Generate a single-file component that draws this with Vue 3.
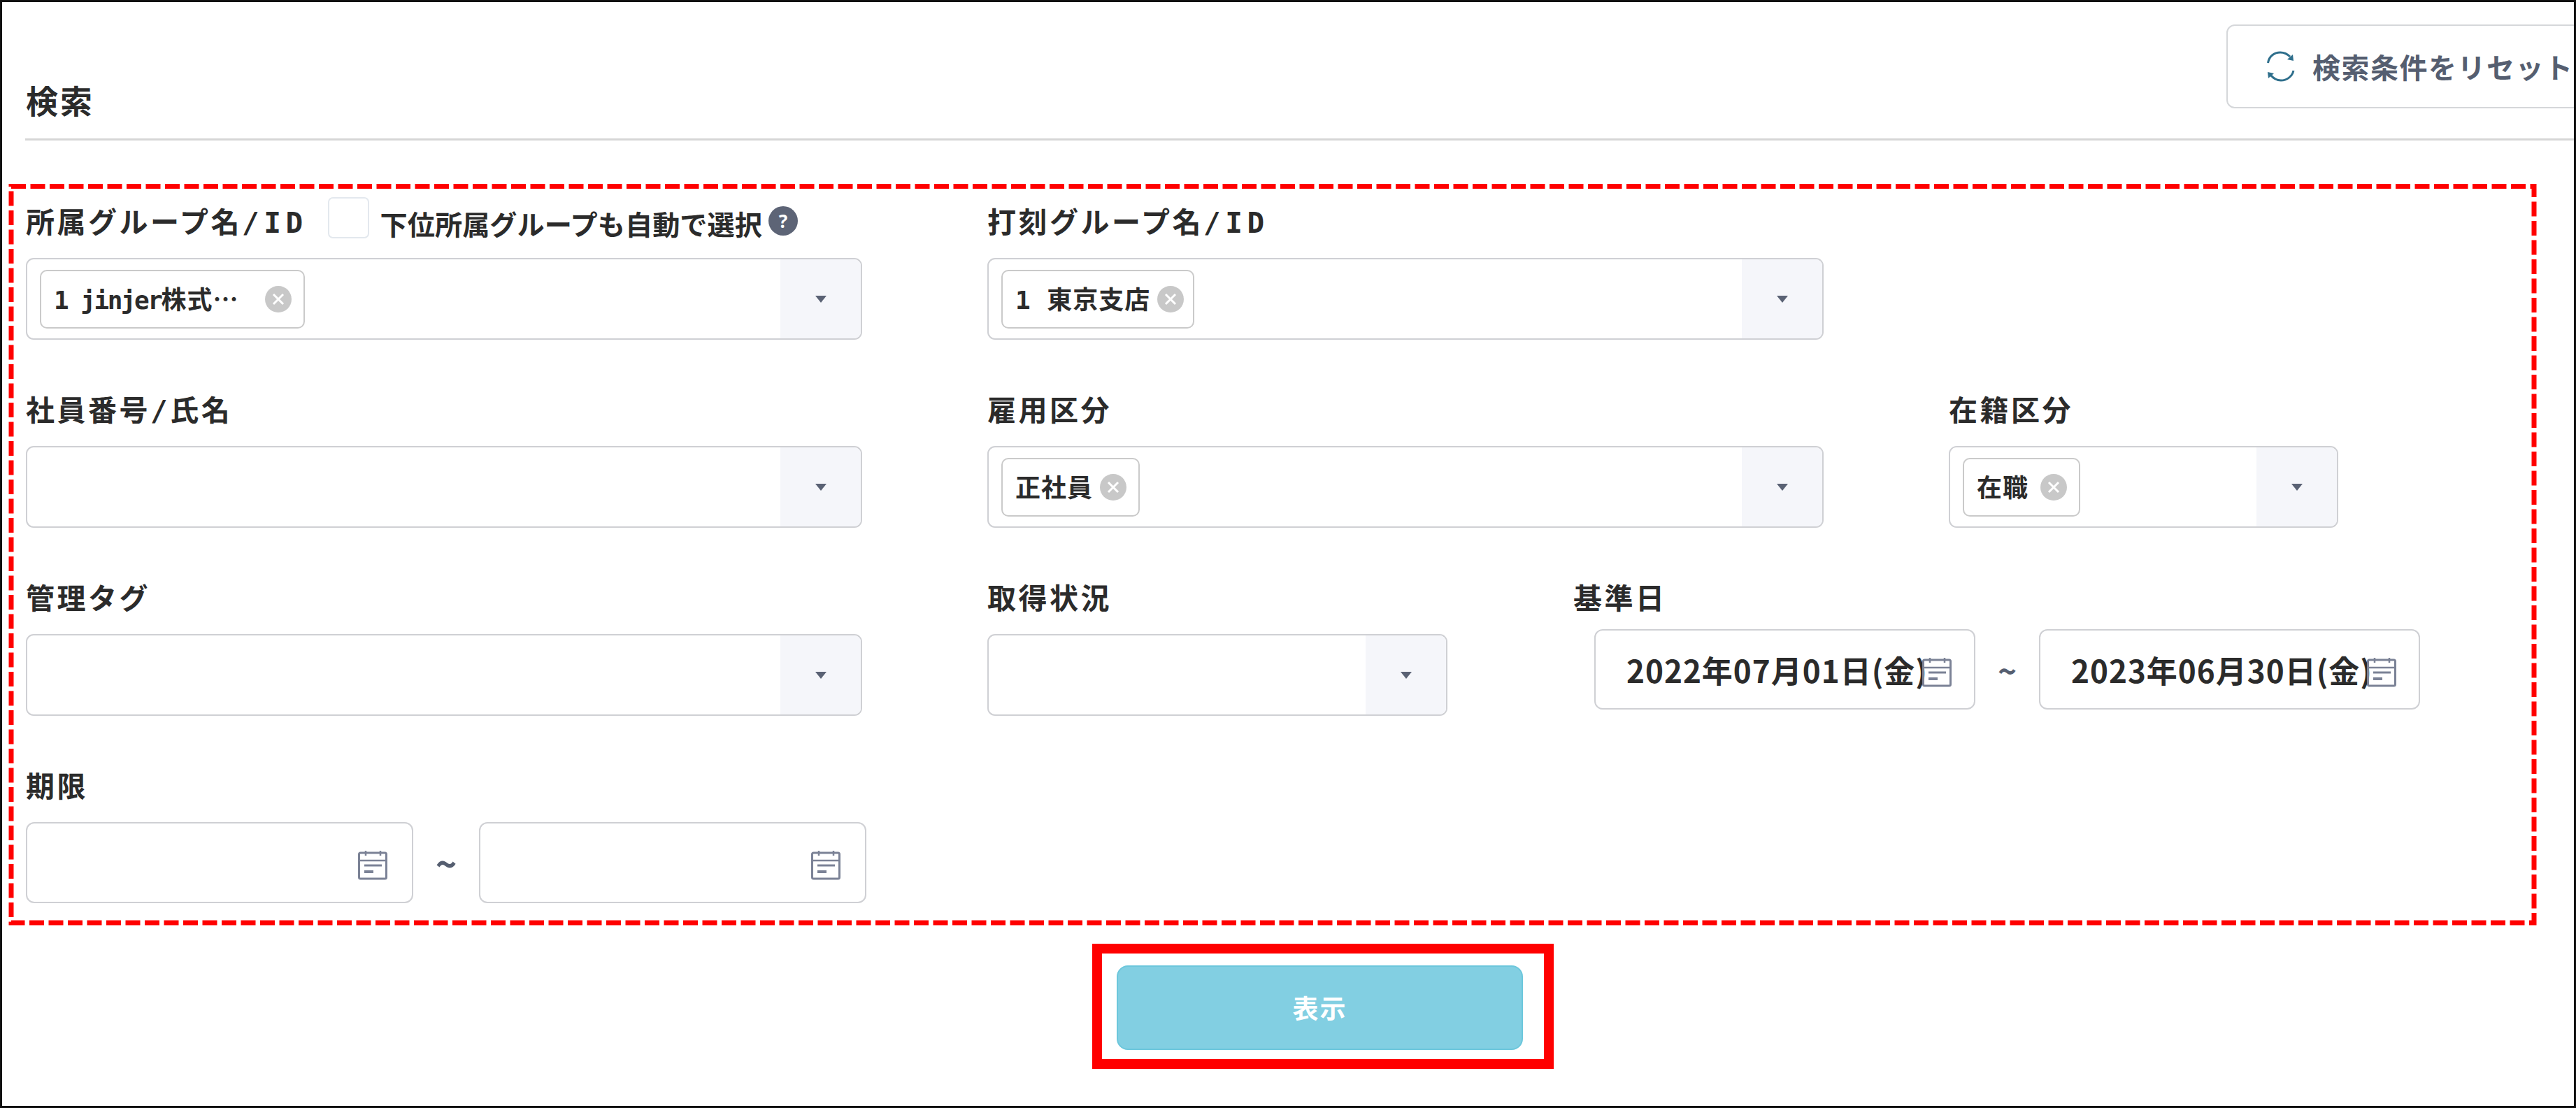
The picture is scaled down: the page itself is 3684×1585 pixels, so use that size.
<template>
  <div class="frame">
    <header class="head">
      <h1 class="title">検索</h1>
      <button class="reset" type="button">
        <svg class="reset-icon" width="40" height="46" viewBox="0 0 40 46" fill="none" aria-hidden="true">
          <path d="M1.5 18C3 8 11 3 19 3c5 0 10 2 14 6" stroke="#2f6f8c" stroke-width="3" />
          <path d="M29 13l9 2-1-9z" fill="#2f6f8c" />
          <path d="M38 29C36 38 28 43 20 43c-6 0-11-3-15-8" stroke="#2f6f8c" stroke-width="3" />
          <path d="M10 33l-9-2 1 9z" fill="#2f6f8c" />
        </svg>
        検索条件をリセット
      </button>
    </header>

    <form class="form" @submit.prevent>
      <div class="row">
        <div class="field w-col">
          <div class="label-line">
            <label class="label">所属グループ名<span class="latin">/ID</span></label>
            <span class="check"></span>
            <span class="sub-label">下位所属グループも自動で選択</span>
            <span class="help">?</span>
          </div>
          <div class="select">
            <span class="chip chip-first">
              <span class="chip-text"><span class="tight">1 jinjer</span>株式<span class="ell">…</span></span>
              <svg class="clear" viewBox="0 0 38 38" aria-hidden="true"><circle cx="19" cy="19" r="19" fill="#c8c8c8" /><path d="M12 12l14 14M26 12L12 26" stroke="#fff" stroke-width="3" /></svg>
            </span>
            <span class="arrow"><i></i></span>
          </div>
        </div>
        <div class="field w-col">
          <div class="label-line"><label class="label">打刻グループ名<span class="latin">/ID</span></label></div>
          <div class="select">
            <span class="chip chip-tokyo">
              <span class="chip-text">1 東京支店</span>
              <svg class="clear" viewBox="0 0 38 38" aria-hidden="true"><circle cx="19" cy="19" r="19" fill="#c8c8c8" /><path d="M12 12l14 14M26 12L12 26" stroke="#fff" stroke-width="3" /></svg>
            </span>
            <span class="arrow"><i></i></span>
          </div>
        </div>
      </div>

      <div class="row">
        <div class="field w-col">
          <div class="label-line"><label class="label">社員番号/氏名</label></div>
          <div class="select"><span class="arrow"><i></i></span></div>
        </div>
        <div class="field w-col">
          <div class="label-line"><label class="label">雇用区分</label></div>
          <div class="select">
            <span class="chip">
              <span class="chip-text">正社員</span>
              <svg class="clear" viewBox="0 0 38 38" aria-hidden="true"><circle cx="19" cy="19" r="19" fill="#c8c8c8" /><path d="M12 12l14 14M26 12L12 26" stroke="#fff" stroke-width="3" /></svg>
            </span>
            <span class="arrow"><i></i></span>
          </div>
        </div>
        <div class="field w-status">
          <div class="label-line"><label class="label">在籍区分</label></div>
          <div class="select">
            <span class="chip chip-status">
              <span class="chip-text">在職</span>
              <svg class="clear" viewBox="0 0 38 38" aria-hidden="true"><circle cx="19" cy="19" r="19" fill="#c8c8c8" /><path d="M12 12l14 14M26 12L12 26" stroke="#fff" stroke-width="3" /></svg>
            </span>
            <span class="arrow"><i></i></span>
          </div>
        </div>
      </div>

      <div class="row">
        <div class="field w-col">
          <div class="label-line"><label class="label">管理タグ</label></div>
          <div class="select"><span class="arrow"><i></i></span></div>
        </div>
        <div class="field w-small">
          <div class="label-line"><label class="label">取得状況</label></div>
          <div class="select"><span class="arrow"><i></i></span></div>
        </div>
        <div class="field base-date">
          <div class="label-line"><label class="label">基準日</label></div>
          <div class="range range-base">
            <template v-for="(d, i) in baseDates" :key="d">
              <span v-if="i" class="tilde">~</span>
              <div class="date date-base">
                <span class="date-text">{{ d }}</span>
                <svg class="cal" viewBox="0 0 42 42" fill="none" aria-hidden="true">
                  <rect x="1.5" y="3" width="39" height="37" rx="2" stroke="#7b8296" stroke-width="3" />
                  <path d="M2 14h38M11 0v7M32 0v7" stroke="#7b8296" stroke-width="2.5" />
                  <path d="M9 21h25" stroke="#7b8296" stroke-width="3" />
                  <path d="M9 30h13" stroke="#7b8296" stroke-width="4" />
                </svg>
              </div>
            </template>
          </div>
        </div>
      </div>

      <div class="row">
        <div class="field">
          <div class="label-line"><label class="label">期限</label></div>
          <div class="range">
            <template v-for="i in 2" :key="i">
              <span v-if="i > 1" class="tilde">~</span>
              <div class="date">
                <svg class="cal" viewBox="0 0 42 42" fill="none" aria-hidden="true">
                  <rect x="1.5" y="3" width="39" height="37" rx="2" stroke="#7b8296" stroke-width="3" />
                  <path d="M2 14h38M11 0v7M32 0v7" stroke="#7b8296" stroke-width="2.5" />
                  <path d="M9 21h25" stroke="#7b8296" stroke-width="3" />
                  <path d="M9 30h13" stroke="#7b8296" stroke-width="4" />
                </svg>
              </div>
            </template>
          </div>
        </div>
      </div>

      <div class="submit-line">
        <div class="submit-mark">
          <button class="submit" type="submit">表示</button>
        </div>
      </div>
    </form>

    <svg class="dashed" width="3684" height="1585" aria-hidden="true">
      <rect x="16" y="266.5" width="3608" height="1053.5" fill="none" stroke="#ff0000" stroke-width="7" stroke-dasharray="21 6.5" />
    </svg>
  </div>
</template>

<script setup>
const baseDates = ['2022年07月01日(金)', '2023年06月30日(金)']
</script>

<style>
html, body { margin: 0; background: #fff; }
</style>

<style scoped>
.frame {
  position: relative; box-sizing: border-box; width: 3684px; height: 1585px;
  border: 3px solid #111; overflow: hidden; background: #fff; color: #2b2b2b;
  font-family: "DejaVu Sans Mono", "Noto Sans CJK JP", monospace;
}
.head {
  display: flex; align-items: flex-start; height: 195px; margin-left: 33px;
  border-bottom: 3px solid #d6d6d6;
}
.title {
  margin: 113px 0 0 1px; font: 700 46px/52px "Noto Sans CJK JP", sans-serif; letter-spacing: 3px;
}
.reset {
  display: flex; align-items: center; flex-shrink: 0; box-sizing: border-box;
  width: 600px; height: 120px; margin: 32px -103px 0 auto; padding: 0 0 0 56px;
  background: #fff; border: 2px solid #d5d7da; border-radius: 12px;
  color: #555e70; font: 700 40px/1 "Noto Sans CJK JP", sans-serif; letter-spacing: 1.5px;
}
.reset-icon { margin-right: 25px; }

.form { padding: 88px 0 0 34px; }
.row { display: flex; margin-bottom: 72px; }
.field { flex: none; }
.w-col { width: 1375px; }
.w-col .select { width: 1196px; }
.w-status { width: 557px; }
.w-status .select { width: 557px; }
.w-small { width: 838px; }
.w-small .select { width: 658px; }

.label-line { display: flex; align-items: center; height: 60px; margin-bottom: 20px; }
.label { font-size: 41px; font-weight: 700; letter-spacing: 3.5px; line-height: 60px; white-space: nowrap; }
.latin { letter-spacing: 6.5px; }
.check {
  align-self: flex-start; box-sizing: border-box; width: 59px; height: 59px; margin: -7px 16px 0 29px;
  border: 2px solid #e3e8ee; border-radius: 7px;
}
.sub-label {
  font: 700 39.2px/60px "Noto Sans CJK JP", sans-serif; white-space: nowrap;
}
.help {
  width: 42px; height: 42px; margin-left: 9px; margin-top: -6px; border-radius: 50%; background: #5d6476;
  color: #fff; font: 700 26px/42px "Noto Sans", sans-serif; text-align: center;
}

.select {
  display: flex; align-items: center; box-sizing: border-box; height: 117px; padding-left: 18px;
  background: #fff; border: 2px solid #cfd0d4; border-radius: 11px; overflow: hidden;
}
.chip {
  display: flex; align-items: center; box-sizing: border-box; height: 84px; padding: 0 17px 0 18px;
  border: 2px solid #cacaca; border-radius: 10px;
}
.chip-tokyo { padding-right: 13px; }
.chip-first .chip-text { width: 292px; }
.chip-status .chip-text { width: 81px; }
.chip-text { font-size: 36px; font-weight: 700; letter-spacing: 1px; white-space: nowrap; margin-right: 10px; margin-top: -4px; }
.tight { letter-spacing: -2.5px; }
.ell { font-family: "Noto Sans CJK JP", sans-serif; }
.clear { flex: none; width: 38px; height: 38px; }
.arrow {
  display: flex; align-items: center; justify-content: center; align-self: stretch;
  width: 115px; margin-left: auto; background: #f5f6fa;
}
.arrow i {
  width: 0; height: 0; border-style: solid; border-width: 10px 8px 0; border-color: #5a6274 transparent transparent;
}

.range { display: flex; align-items: center; }
.tilde {
  width: 94px; text-align: center; color: #555e70;
  font: 700 52px/1 "Noto Sans CJK JP", sans-serif;
}
.date {
  display: flex; align-items: center; justify-content: flex-end; box-sizing: border-box;
  width: 554px; height: 116px; padding-right: 35px;
  border: 2px solid #cfd0d4; border-radius: 12px;
}
.cal { flex: none; width: 42px; height: 42px; margin-top: 8px; }

.range-base { margin: -7px 0 0 30px; }
.range-base .tilde { width: 91px; font-size: 46px; }
.date-base { width: 545px; height: 115px; padding: 0 35px 0 44px; justify-content: flex-start; }
.date-text {
  flex: none; width: 423px; white-space: nowrap;
  font: 700 44px/1 "Noto Sans CJK JP", sans-serif; letter-spacing: 1px;
}

.submit-line { display: flex; margin-top: -14px; }
.submit-mark {
  box-sizing: border-box; width: 660px; height: 179px; margin-left: 1525px; padding: 17px 0 0 21px;
  border: 14px solid #ff0000;
}
.submit {
  display: block; width: 581px; height: 121px; background: #82cfe2;
  border: 2px solid #6cc7dc; border-radius: 16px; color: #fff;
  font: 700 37px/1 "Noto Sans CJK JP", sans-serif; letter-spacing: 2px;
}

.dashed { position: absolute; left: -3px; top: -3px; pointer-events: none; }
</style>
